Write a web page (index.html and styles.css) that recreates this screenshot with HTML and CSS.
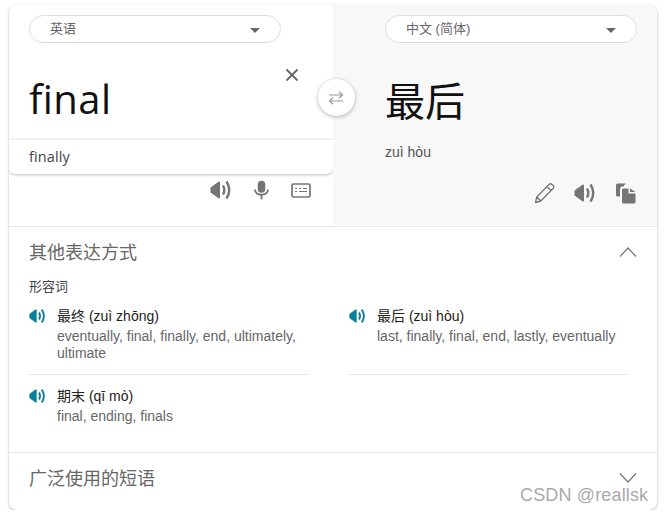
FILE: index.html
```html
<!DOCTYPE html>
<html lang="zh-CN">
<head>
  <meta charset="UTF-8">
  <title>Translator</title>
  <link rel="stylesheet" href="styles.css">
</head>
<body>
  <svg class="defs" width="0" height="0">
    <symbol id="speaker" viewBox="0 0 22 20">
      <path d="M1.5 8 L9 2.5 V17.5 L1.5 12 Z" fill="currentColor" stroke="currentColor" stroke-width="2" stroke-linejoin="round"/>
      <path d="M13 5.5 Q15.6 10 13 14.5" fill="none" stroke="currentColor" stroke-width="2.4"/>
      <path d="M16.5 1.5 Q22 10 16.5 18.5" fill="none" stroke="currentColor" stroke-width="2.4"/>
    </symbol>
  </svg>

  <div class="card">
    <div class="top">
      <div class="pane source">
        <div class="lang-select">
          <span>英语</span>
          <i class="caret"></i>
        </div>
        <div class="input-row">
          <div class="big-word">final</div>
          <svg class="clear" width="14" height="14" viewBox="0 0 14 14">
            <path d="M1.5 1.5 L12.5 12.5 M12.5 1.5 L1.5 12.5" stroke="#666" stroke-width="1.8"/>
          </svg>
        </div>
        <div class="suggest">finally</div>
        <div class="tools source-tools">
          <svg class="tool" width="22" height="20"><use href="#speaker"/></svg>
          <svg class="tool" width="15" height="20" viewBox="0 0 16 20">
            <rect x="4" y="0" width="8" height="13" rx="4" fill="currentColor"/>
            <path d="M1 9.5 Q1.5 15 8 15 Q14.5 15 15 9.5" fill="none" stroke="currentColor" stroke-width="2"/>
            <rect x="7" y="15" width="2" height="5" fill="currentColor"/>
          </svg>
          <svg class="tool keyboard" width="20" height="16" viewBox="0 0 20 16">
            <rect x="1" y="1" width="18" height="13" rx="1.5" fill="none" stroke="currentColor" stroke-width="1.7"/>
            <path d="M4 5.5 h2 M8 5.5 h2 M12 5.5 h4 M4 8.5 h2 M8 8.5 h8" stroke="currentColor" stroke-width="1"/>
          </svg>
        </div>
      </div>

      <div class="pane target">
        <div class="lang-select">
          <span>中文 (简体)</span>
          <i class="caret"></i>
        </div>
        <div class="big-han">最后</div>
        <div class="pinyin">zuì hòu</div>
        <div class="tools target-tools">
          <svg class="tool" width="21" height="22" viewBox="0 0 21 22">
            <path d="M1.5 20.5 L2.8 15 L15 2.5 Q16.5 1 18.2 2.5 L19 3.3 Q20.5 5 19 6.5 L6.8 19 Z M13 4.5 L17.2 8.7 M2.8 15 L6.8 19" fill="none" stroke="currentColor" stroke-width="1.3" stroke-linejoin="round"/>
          </svg>
          <svg class="tool" width="22" height="20"><use href="#speaker"/></svg>
          <svg class="tool" width="21" height="21" viewBox="0 0 21 21">
            <path d="M1 2 Q1 0.5 2.5 0.5 H11 Q9 2 8.5 3.5 H7 Q5 3.5 5 6 V13.5 H2.5 Q1 13.5 1 12 Z" fill="currentColor"/>
            <path d="M7 7 Q7 5.5 8.5 5.5 H13.5 V10.5 H20.5 V19 Q20.5 20.5 19 20.5 H8.5 Q7 20.5 7 19 Z M15 5.5 L20.5 9 H15 Z" fill="currentColor"/>
          </svg>
        </div>
      </div>

      <button class="swap">
        <svg width="16" height="14" viewBox="0 0 16 14">
          <path d="M1 4 H14.5 M11 0.8 L14.5 4 L11 7.2 M15 10 H1.5 M5 6.8 L1.5 10 L5 13.2" fill="none" stroke="#9a9a9a" stroke-width="1.2"/>
        </svg>
      </button>
    </div>

    <section class="more">
      <div class="section-head">
        <h3>其他表达方式</h3>
        <svg width="18" height="10" viewBox="0 0 18 10">
          <path d="M1 9.5 L9 1 L17 9.5" fill="none" stroke="#777" stroke-width="1.2"/>
        </svg>
      </div>
      <div class="pos">形容词</div>
      <div class="word-grid">
        <div class="word first">
          <svg class="play" width="17" height="16"><use href="#speaker"/></svg>
          <div>
            <div class="word-head">最终 (zuì zhōng)</div>
            <div class="gloss">eventually, final, finally, end, ultimately, ultimate</div>
          </div>
        </div>
        <div class="word first">
          <svg class="play" width="17" height="16"><use href="#speaker"/></svg>
          <div>
            <div class="word-head">最后 (zuì hòu)</div>
            <div class="gloss">last, finally, final, end, lastly, eventually</div>
          </div>
        </div>
        <div class="word">
          <svg class="play" width="17" height="16"><use href="#speaker"/></svg>
          <div>
            <div class="word-head">期末 (qī mò)</div>
            <div class="gloss">final, ending, finals</div>
          </div>
        </div>
      </div>
    </section>

    <section class="phrases">
      <div class="section-head">
        <h3>广泛使用的短语</h3>
        <svg width="18" height="10" viewBox="0 0 18 10">
          <path d="M1 0.5 L9 9 L17 0.5" fill="none" stroke="#777" stroke-width="1.2"/>
        </svg>
      </div>
    </section>
  </div>

  <div class="watermark">CSDN @reallsk</div>
</body>
</html>
```

FILE: styles.css
```css
body {
  margin: 0;
  padding: 5px 7px 0 9px;
  background-color: #fff;
  font-family: "Liberation Sans", "Noto Sans CJK SC", sans-serif;
}

.defs {
  position: absolute;
}

.card {
  height: 505px;
  border-radius: 8px;
  background-color: #fff;
  box-shadow: 0 1px 3px rgba(0, 0, 0, 0.3);
  overflow: hidden;
}

/* Top half with the two panes */
.top {
  position: relative;
  display: grid;
  grid-template-columns: 324px 324px;
  height: 222px;
  border-bottom: 1px solid #e8e8e8;
  box-sizing: border-box;
}

.pane {
  padding-top: 10px;
  box-sizing: border-box;
}

.target {
  padding-left: 52px;
  background-color: #f8f8f8;
}

.source {
  padding-left: 20px;
}

.lang-select {
  display: flex;
  justify-content: space-between;
  align-items: center;
  width: 252px;
  height: 28px;
  padding: 0 20px 0 20px;
  border: 1px solid #ddd;
  border-radius: 14px;
  background-color: #fff;
  box-sizing: border-box;
  color: #666;
  font-size: 13px;
}

.lang-select span {
  margin-top: -4px;
}

.caret {
  width: 0;
  height: 0;
  margin-top: 3px;
  border-left: 5.5px solid transparent;
  border-right: 5.5px solid transparent;
  border-top: 5px solid #666;
}

.input-row {
  display: flex;
  justify-content: space-between;
  height: 96px;
  padding-right: 34px;
}

.big-word {
  margin-top: 26px;
  color: #111;
  font-family: "Open Sans", "Noto Sans", sans-serif;
  font-size: 40px;
  letter-spacing: 0.4px;
  line-height: 60px;
}

.clear {
  margin-top: 25px;
}

.suggest {
  height: 35px;
  margin-left: -20px;
  padding-left: 20px;
  border-top: 1px solid #eee;
  border-radius: 0 0 6px 6px;
  box-sizing: border-box;
  box-shadow: 0 1px 3px rgba(0, 0, 0, 0.25);
  color: #444;
  font-family: "Open Sans", "Noto Sans", sans-serif;
  font-size: 14.5px;
  letter-spacing: 0.1px;
  line-height: 33px;
}

.tools {
  display: flex;
  align-items: center;
  justify-content: flex-end;
  color: #757575;
}

.source-tools {
  gap: 22px;
  margin-top: 6px;
  padding-right: 22px;
}

.keyboard {
  margin-top: 1px;
}

.target-tools {
  gap: 19px;
  margin-top: 21px;
  padding-right: 21px;
}

.big-han {
  margin-top: 31px;
  color: #111;
  font-size: 40px;
  line-height: 56px;
}

.pinyin {
  margin-top: 13px;
  color: #555;
  font-size: 14px;
  line-height: 18px;
}

.swap {
  position: absolute;
  left: 309px;
  top: 74px;
  display: flex;
  align-items: center;
  justify-content: center;
  width: 37px;
  height: 37px;
  padding: 0 2px 0 0;
  border: none;
  border-radius: 50%;
  background-color: #fff;
  box-shadow: 0 1px 4px rgba(0, 0, 0, 0.3);
}

/* Lower sections */
.more {
  height: 226px;
  padding: 0 20px;
  border-bottom: 1px solid #e8e8e8;
  box-sizing: border-box;
}

.section-head {
  display: flex;
  justify-content: space-between;
  align-items: center;
  height: 50px;
}

.section-head h3 {
  margin: -3px 0 0;
  color: #666;
  font-size: 18px;
  font-weight: normal;
}

.pos {
  margin-top: 1px;
  color: #444;
  font-size: 13px;
  line-height: 18px;
}

.word-grid {
  display: grid;
  grid-template-columns: 280px 279px;
  column-gap: 40px;
  margin-top: 11px;
}

.word {
  display: flex;
  gap: 11px;
  padding-top: 12px;
}

.word.first {
  height: 68px;
  padding-top: 0;
  border-bottom: 1px solid #e8e8e8;
  box-sizing: border-box;
}

.play {
  flex: none;
  margin-top: 1px;
  color: #0a7f9b;
}

.word-head {
  color: #222;
  font-size: 14px;
  line-height: 18px;
}

.gloss {
  margin-top: 3px;
  color: #666;
  font-size: 14px;
  line-height: 17px;
}

.phrases {
  padding: 0 20px;
}

.watermark {
  position: absolute;
  left: 520px;
  top: 484px;
  color: #aaa;
  font-size: 18px;
  letter-spacing: 0.15px;
  line-height: 22px;
  text-shadow: 0 0 2px #fff;
}
```
